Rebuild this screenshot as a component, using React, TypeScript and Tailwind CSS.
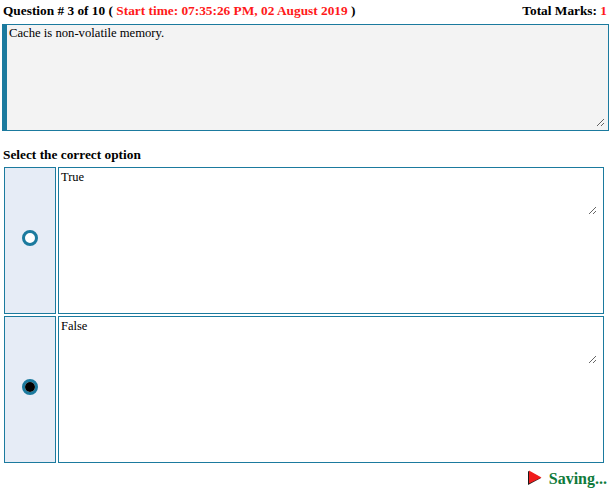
import React from 'react';

const options = [
  { id: 'true', label: 'True', selected: false },
  { id: 'false', label: 'False', selected: true },
];

function OptionRow({ label, selected }: { label: string; selected: boolean }) {
  return (
    <div className="flex h-[147px] gap-[2px]">
      <div className="flex w-[52px] items-center justify-center border border-[#1b7a9e] bg-[#e6ecf6] pb-[5px]">
        <div className="flex h-[16px] w-[16px] items-center justify-center rounded-full border-[3px] border-[#1b7a9e] bg-white">
          {selected && <div className="h-[10px] w-[10px] rounded-full bg-black" />}
        </div>
      </div>
      <div className="flex-1 border border-[#1b7a9e] bg-white">
        <textarea
          readOnly
          defaultValue={label}
          className="block h-[47px] w-[538px] bg-transparent px-[2px] py-[2px] text-[12.5px] leading-[14px] text-black outline-none"
        />
      </div>
    </div>
  );
}

export default function App() {
  return (
    <div className="h-[498px] w-[612px] overflow-hidden bg-white font-['Liberation_Serif',serif] text-black">
      <div className="mb-[2px] flex h-[22px] items-center justify-between pl-[3px] pr-[5px] text-[13.33px] font-bold">
        <div>
          Question # 3 of 10 ( <span className="text-[#ff1a1a]">Start time: 07:35:26 PM, 02 August 2019</span> )
        </div>
        <div>
          Total Marks: <span className="text-[#ff1a1a]">1</span>
        </div>
      </div>

      <div className="ml-[2px] h-[107px] w-[607px] border border-l-[5px] border-[#1b7a9e] bg-[#f3f3f3]">
        <textarea
          readOnly
          defaultValue="Cache is non-volatile memory."
          className="block h-[102px] w-[598px] bg-transparent px-[2px] py-[1px] text-[12.67px] leading-[15px] text-black outline-none"
        />
      </div>

      <div className="pl-[3px] pt-[17px] text-[13.33px] leading-[14px] font-bold">Select the correct option</div>

      <div className="ml-[4px] mt-[5px] flex w-[600px] flex-col gap-[2px]">
        {options.map((o) => (
          <OptionRow key={o.id} label={o.label} selected={o.selected} />
        ))}
      </div>

      <div className="flex items-center justify-end gap-[7px] pr-[5px] pt-[6px]">
        <svg width="15" height="16" viewBox="0 0 15 16" className="mb-[3px]">
          <path d="M1 1L14 8L1 15Z" fill="#1a1a1a" />
          <path d="M2 0.5L14.5 7.5L2 13.5Z" fill="#f01c1c" />
        </svg>
        <span className="text-[16px] leading-[20px] font-bold text-[#0f7a3a]">Saving...</span>
      </div>
    </div>
  );
}
